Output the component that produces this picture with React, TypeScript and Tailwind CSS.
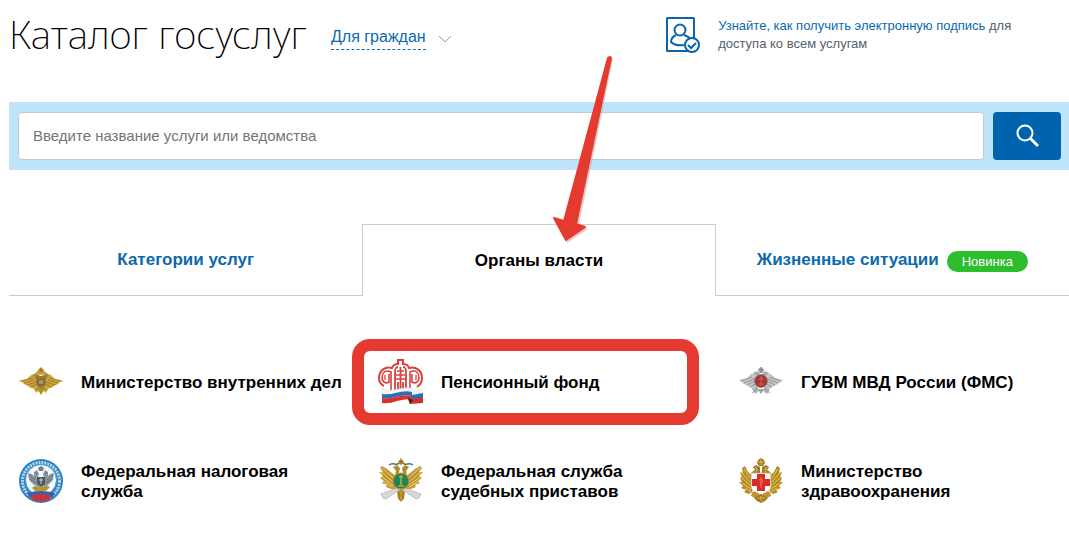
import type { ReactNode } from "react"

const MvdEmblem = () => (
    <svg viewBox="0 0 46 46" className="w-full h-full" aria-hidden="true">
        {["", "translate(46 0) scale(-1 1)"].map((t) => (
            <g key={t} transform={t}>
                <path d="M0 22L9 20L12 17L15 15L17 18L21 19V29L17 30L13 29L10 27L6 25L4 23Z" fill="#cda338" />
                <path d="M3 22L15 19M6 24L16 21M9 26L18 23M13 28L19 25" stroke="#8a7129" strokeWidth="0.7" />
                <path d="M15 16L20 12L22 17L20 20L17 19Z" fill="#a98736" />
                <path d="M18 15L20 14L21 17" stroke="#e8c86a" strokeWidth="0.8" fill="none" />
                <path d="M16 30L20 27L22 31L18 34Z" fill="#d3aa35" />
                <path d="M17 31L21 29" stroke="#755f24" strokeWidth="0.7" />
            </g>
        ))}
        <path d="M20 11L23 8L26 11L27 14L23 16L19 14Z" fill="#c79b2c" />
        <path d="M23 9V13M21 11H25" stroke="#7a5d18" strokeWidth="0.6" />
        <path d="M18 17H28V25L23 32L18 25Z" fill="#94793a" />
        <circle cx="23" cy="23" r="3" fill="#b6954a" stroke="#6a5c33" />
        <path d="M20 31L23 29L26 31L23 36Z" fill="#b98d20" />
    </svg>
)

const PensionEmblem = () => (
    <svg viewBox="0 0 46 46" className="w-full h-full" fill="none" aria-hidden="true">
        <path
            d="M6 27C2 25 1 22 1 19C1 12 7 7 14 9C15 6 18 5 20 5V1H25V5C27 5 30 6 31 9C38 7 44 12 44 19C44 22 42 26 39 28"
            fill="#fff"
            stroke="#d9403c"
            strokeWidth="2"
        />
        <path d="M13 31V13C7 10 4 14 4 19C4 23 8 25 11 23V15M32 31V13C38 10 41 14 41 19C41 23 37 25 34 23V15" stroke="#d9403c" strokeWidth="1.6" />
        <path d="M7 16V21M38 16V21" stroke="#d9403c" strokeWidth="1.3" />
        <path d="M17 31V12C17 9 19 8 20 8M28 31V12C28 9 26 8 25 8M22.5 8V32M20 31V23M25 31V23" stroke="#d9403c" strokeWidth="1.8" />
        <path d="M19 12H26M17 20H28M18 16H27" stroke="#d9403c" strokeWidth="1.5" />
        <path d="M4 30C14 34 24 27 34 29V41C24 38 14 45 4 43Z" fill="#f7f7f7" stroke="#cfd4da" strokeWidth="0.5" />
        <path d="M4 35C14 37 24 30 34 33V37C24 34 14 41 4 39Z" fill="#276fbd" />
        <path d="M4 39C14 41 24 34 34 37V41C24 38 14 46 4 44Z" fill="#dc302d" />
        <path d="M34 31L45 30V34L34 36Z" fill="#eef1f5" />
        <path d="M34 36L45 34V39L34 41Z" fill="#276fbd" />
        <path d="M34 40L45 38V44L32 45L30 40Z" fill="#cf302f" />
        <path d="M30 39L35 41L32 45Z" fill="#482127" />
    </svg>
)

const GuvmEmblem = () => (
    <svg viewBox="0 0 46 46" className="w-full h-full" aria-hidden="true">
        {["", "translate(46 0) scale(-1 1)"].map((t) => (
            <g key={t} transform={t}>
                <path d="M1 21L9 19L13 15L17 14L19 20V29L15 30L10 27L6 25Z" fill="#c3c6c6" />
                <path d="M3 22L14 18M6 24L16 20M9 26L17 22M12 28L18 25" stroke="#858a8c" strokeWidth="0.8" />
                <path d="M15 14L19 12L22 15L20 18Z" fill="#a8acac" />
                <path d="M14 30L19 27L21 32L17 35Z" fill="#b3b7b7" />
                <path d="M14 34L20 29" stroke="#777" strokeWidth="0.7" />
            </g>
        ))}
        <path d="M20 10L23 8L26 10L25 14H21Z" fill="#b0aeae" />
        <path d="M23 8V14M20 11H26" stroke="#777" strokeWidth="0.7" />
        <circle cx="23" cy="22" r="6.5" fill="#ae302e" stroke="#858585" />
        <path d="M23 17V27M20 21L23 19L26 21M20 25H26" stroke="#cf7f76" strokeWidth="0.7" fill="none" />
        <path d="M20 30H26L23 35Z" fill="#9b9e9e" />
    </svg>
)

const TaxEmblem = () => (
    <svg viewBox="0 0 46 46" className="w-full h-full" fill="none" aria-hidden="true">
        <circle cx="23" cy="23" r="22" fill="#2b82c4" />
        <circle cx="23" cy="23" r="18.5" stroke="#b5d7ee" strokeWidth="3" strokeDasharray="2 1" />
        <circle cx="23" cy="22" r="15.5" fill="#f5fafc" stroke="#4b9ad0" />
        {["", "translate(46 0) scale(-1 1)"].map((t) => (
            <g key={t} transform={t}>
                <path d="M22 29L16 27L11 22L10 15L14 16L16 18L16 14L19 12L21 16L20 19L22 21Z" fill="#8996a0" />
                <path d="M11 17L17 22M12 21L18 25M17 14L19 16" stroke="#53616b" strokeWidth="0.8" />
            </g>
        ))}
        <path d="M20 10L23 8L26 10L25 13H21Z" fill="#71808b" />
        <path d="M19 19H27V26L23 29L19 26Z" fill="#4c5860" />
        <path d="M21 22H25M23 20V26" stroke="#c5cbd0" />
        <path d="M14 30C18 25 23 32 28 27L32 29L28 33L18 34Z" fill="#b39935" />
        <path d="M11 36Q23 32 35 36L32 39Q23 43 14 39Z" fill="#e9f1f6" />
        <path d="M9 35Q23 31 37 35L34 40Q23 35 12 40Z" fill="#3361ad" />
        <path d="M12 38Q23 34 34 38L31 42Q23 45 15 42Z" fill="#c9333c" />
    </svg>
)

const BailiffEmblem = () => (
    <svg viewBox="0 0 46 46" className="w-full h-full" fill="none" aria-hidden="true">
        {["", "translate(46 0) scale(-1 1)"].map((t) => (
            <g key={t} transform={t}>
                <path d="M4 8L9 11L14 15L18 18V31L13 31L8 29L9 27L4 25L6 23L2 20L5 18L1 14L5 14L2 10Z" fill="#c59a38" />
                <path d="M4 10L16 21M3 14L15 24M4 19L15 27M6 24L15 29" stroke="#f1d277" strokeWidth="0.9" />
                <path d="M5 12L16 23M5 17L15 26" stroke="#9c7627" strokeWidth="0.6" />
                <path d="M15 9L19 7L22 10L21 15L17 17L18 13Z" fill="#b58a29" />
                <path d="M11 7C15 3 18 9 21 5" stroke="#38856b" strokeWidth="1.5" />
                <path d="M3 36L19 30L21 32L8 41L5 40Z" fill="#d8d6db" stroke="#a3a4ac" strokeWidth="0.6" />
            </g>
        ))}
        <path d="M20 5L21 2H25L26 5L23 7Z" fill="#b97c2d" />
        <path d="M23 0V5" stroke="#8b6227" />
        <circle cx="23" cy="23" r="8" fill="#218451" stroke="#b98f31" strokeWidth="1.2" />
        <path d="M23 17V28M21 19H25M20 28H26" stroke="#9dad45" strokeWidth="1.7" />
        <path d="M19 34L23 30L27 34L26 41L23 44L20 41Z" fill="#bf942d" />
        <path d="M21 34V41M25 34V41" stroke="#806019" strokeWidth="0.7" />
    </svg>
)

const HealthEmblem = () => (
    <svg viewBox="0 0 46 46" className="w-full h-full" fill="none" aria-hidden="true">
        {["", "translate(46 0) scale(-1 1)"].map((t) => (
            <g key={t} transform={t}>
                <path d="M7 8L10 14L14 18V34L11 36L6 34L8 32L3 30L5 28L1 24L4 24L2 20L4 19L2 14L5 15L4 10Z" fill="#b28c23" />
                <path d="M6 11L12 20M4 15L13 25M4 20L13 28M4 25L13 31M7 30L13 34" stroke="#f0d474" strokeWidth="0.9" />
                <path d="M14 14L17 12L15 9L18 7L22 9V17L17 18Z" fill="#a77b20" />
                <path d="M17 9L19 11L18 15" stroke="#e4c15f" />
                <path d="M14 34L20 33L22 38L17 40L13 38Z" fill="#bd962d" />
            </g>
        ))}
        <path d="M19 5L20 2L23 0L26 2L27 5L25 8H21Z" fill="#aa7624" />
        <path d="M23 1V7M20 4H26" stroke="#e7c65d" strokeWidth="0.8" />
        <path d="M13 15H33V29C33 33 28 34 23 37C18 34 13 33 13 29Z" fill="#fff" stroke="#c19a4e" strokeWidth="0.8" />
        <path d="M19 16H27V21H32V28H27V33H19V28H14V21H19Z" fill="#d92b2e" />
        <path d="M23 19V30M21 22C26 20 26 25 22 26" stroke="#e5863e" />
        <path d="M16 40L23 36L30 40L27 43L23 45L19 43Z" fill="#a27b20" />
        <path d="M19 40H27M23 38V43" stroke="#e3c557" strokeWidth="0.8" />
    </svg>
)

const SignatureIcon = () => (
    <svg viewBox="0 0 34 36" className="w-[34px] h-9 shrink-0" fill="none" stroke="#0b65a9" strokeWidth="2" aria-hidden="true">
        <rect x="1" y="1" width="27" height="33" rx="0.5" />
        <circle cx="14" cy="13" r="5.5" />
        <path d="M10 18C6 20 5 22 5 25C8 28 12 29 18 28M18 18C21 19 23 20 24 22" />
        <circle cx="26" cy="28" r="7" fill="#fff" />
        <path d="M22 28L25 31L30 26" />
    </svg>
)

// red frame around the organisation to pick
const Marker = () => (
    <div className="absolute -left-[17px] right-[10px] -inset-y-5 border-12 border-[#e43a2f] rounded-[18px] pointer-events-none" />
)

const PointerArrow = () => (
    <svg viewBox="550 52 66 194" className="absolute left-[550px] top-[52px] w-[66px] h-[194px] pointer-events-none" aria-hidden="true">
        <path d="M609 59L565 222L555 219L567 243L588 229L579 225L613 59Z" fill="#d9a6a0" opacity="0.6" />
        <path
            d="M608 58L564 221L554 218L566 240L585 227L576 224L611 58L610 57Z"
            fill="#e43a2f"
            stroke="#e43a2f"
            strokeWidth="2"
            strokeLinejoin="round"
        />
    </svg>
)

type Organ = { name: string; emblem: ReactNode; marked?: boolean }

const organs: Organ[] = [
    { name: "Министерство внутренних дел", emblem: <MvdEmblem /> },
    { name: "Пенсионный фонд", emblem: <PensionEmblem />, marked: true },
    { name: "ГУВМ МВД России (ФМС)", emblem: <GuvmEmblem /> },
    { name: "Федеральная налоговая служба", emblem: <TaxEmblem /> },
    { name: "Федеральная служба судебных приставов", emblem: <BailiffEmblem /> },
    { name: "Министерство здравоохранения", emblem: <HealthEmblem /> },
]

const App = () => {
    return (
        <div className="relative overflow-hidden bg-white pl-[9px] pb-9 text-black font-['Liberation_Sans',Arial,sans-serif]">
            {/* HEADER */}
            <header className="flex h-[102px] pt-3.5">
                <div className="flex w-[62%] items-start gap-6">
                    <h1 className="font-['Noto_Sans',sans-serif] font-extralight text-[39px] leading-10 whitespace-nowrap">Каталог госуслуг</h1>
                    <button type="button" className="mt-[13px] flex items-center gap-3 text-[#0d69ac] text-base leading-5 whitespace-nowrap">
                        <span className="border-b border-dashed border-[#0d69ac] pb-0.5">Для граждан</span>
                        <svg viewBox="0 0 14 8" className="w-3.5 h-2" fill="none" stroke="#6fa5cb" aria-hidden="true">
                            <path d="M1 1L7 7L13 1" />
                        </svg>
                    </button>
                </div>
                <div className="flex flex-1 items-start gap-[18px] pt-[3px] text-[13px] leading-[18px] text-[#55606a]">
                    <SignatureIcon />
                    <p className="w-[310px]">
                        <a href="#signature" className="text-[#0d69ac]">Узнайте, как получить электронную подпись</a> для доступа ко всем услугам
                    </p>
                </div>
            </header>

            {/* SEARCH */}
            <form className="flex gap-[9px] bg-[#bfe4fb] py-[10px] pl-[9px] pr-2">
                <input
                    type="search"
                    aria-label="Поиск"
                    placeholder="Введите название услуги или ведомства"
                    className="h-12 min-w-0 flex-1 rounded border border-[#c3cbd1] bg-white px-3.5 pb-0.5 text-[15px] placeholder:text-[#757575]"
                />
                <button type="button" aria-label="Найти" className="flex w-[68px] items-center justify-center rounded bg-[#0063b0]">
                    <svg viewBox="0 0 24 24" className="w-6 h-6" fill="none" stroke="#fff" aria-hidden="true">
                        <circle cx="10" cy="9" r="7.5" strokeWidth="2" />
                        <path d="M15.5 14.5L23 22" strokeWidth="3" />
                    </svg>
                </button>
            </form>

            {/* TABS */}
            <div role="tablist" className="mt-[54px] grid h-[72px] grid-cols-3 text-[17px] font-bold text-[#0d69ac]">
                <button type="button" role="tab" aria-selected="false" className="border-b border-[#cccccc]">Категории услуг</button>
                <button type="button" role="tab" aria-selected="true" className="border border-b-0 border-[#cccccc] text-black">Органы власти</button>
                <button type="button" role="tab" aria-selected="false" className="flex items-center justify-center gap-2 border-b border-[#cccccc]">
                    Жизненные ситуации
                    <span className="mt-1 rounded-full bg-[#2dbe2d] px-[15px] text-[13px] font-normal leading-[21px] text-white">Новинка</span>
                </button>
            </div>

            {/* ORGANS */}
            <ul className="mt-[63px] grid grid-cols-3 gap-x-5 gap-y-[53px]">
                {organs.map((o) => (
                    <li key={o.name} className="relative pl-[9px]">
                        <a href="#organ" className="flex items-center gap-[17px] text-[17px] font-bold leading-5">
                            <span className="h-[46px] w-[46px] shrink-0">{o.emblem}</span>
                            <span className="pt-0.5">{o.name}</span>
                        </a>
                        {o.marked && <Marker />}
                    </li>
                ))}
            </ul>

            <PointerArrow />
        </div>
    )
}

export default App
